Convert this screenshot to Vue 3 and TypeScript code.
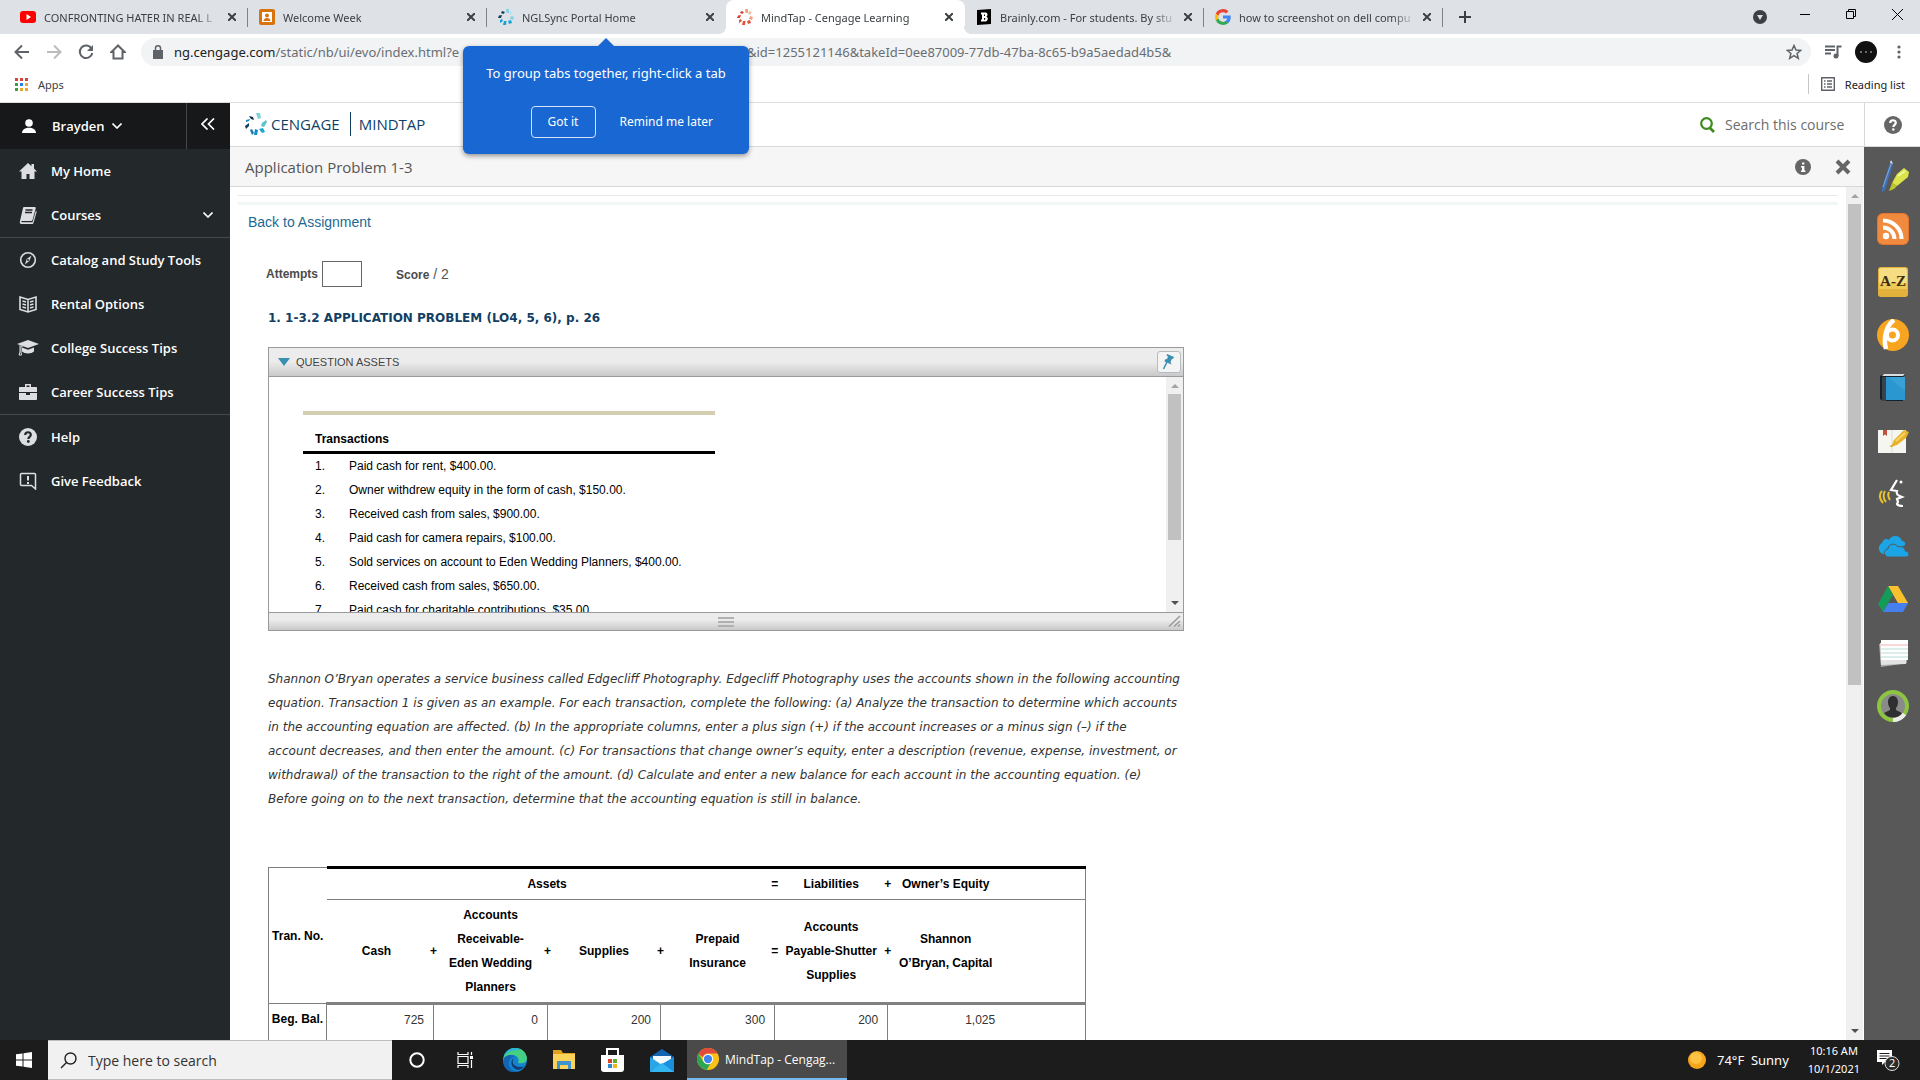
<script setup lang="ts">
import { ref } from 'vue'

interface Tab { title: string; icon: string; active?: boolean; plain?: boolean }

const cengageMark = (a: string, b: string, c: string, d: string): string =>
  `<path d="M8 0h3v4H8.500z" fill="${a}"/><path d="M12 2l3 1-2 3-2-1z" fill="${b}"/><path d="M13 7l3 1-1 3-3-1z" fill="${a}"/><path d="M10 12l3-1 1 3-3 1z" fill="${c}"/><path d="M6 12h2.500l-.5 4H5z" fill="${c}"/><path d="M2 11l2-1 1 2-3 2z" fill="${c}"/><path d="M1 6.500l3-.500-1 3H0z" fill="${d}"/><path d="M4 2l3 1-1.500 2L3 4z" fill="${d}"/>`

const art: Record<string, string> = {
  youtube: '<rect y="2" width="16" height="12" rx="3" fill="#f00"/><path d="M6.500 5v6l4.500-3z" fill="#fff"/>',
  week: '<rect width="16" height="16" rx="2" fill="#d9730d"/><path d="M3 3h10v10H3z" fill="#fff"/><circle cx="8" cy="6.500" r="2" fill="#d9730d"/><path d="M4.500 12c0-4 7-4 7 0z" fill="#d9730d"/>',
  ngl: cengageMark('#7fd3e6', '#b6e6ef', '#16a3d6', '#173d5c'),
  mindtap: cengageMark('#f2a083', '#f6bfa8', '#e0533a', '#d9432f'),
  brainly: '<path d="M1 1l14-1v15L1 16z" fill="#000"/><path d="M5 3.500h4.500c2.500 0 2.500 3.500.8 4 2.200.6 2 5-1 5H5v-2h1v-5H5zm3 2v1.500h1V5.500zm0 3.500v1.800h1.200V9z" fill="#fff" fill-rule="evenodd"/>',
  google: '<path d="M15.700 8.200c0-.6 0-1.100-.2-1.600H8v3h4.300a3.700 3.700 0 01-1.600 2.400v2h2.600c1.500-1.400 2.400-3.400 2.400-5.800z" fill="#4285f4"/><path d="M8 16c2.200 0 4-.7 5.300-1.900l-2.600-2A4.800 4.800 0 013.500 9.500H.9v2.100A8 8 0 008 16z" fill="#34a853"/><path d="M3.500 9.500a4.800 4.800 0 010-3.100V4.300H.9a8 8 0 000 7.200z" fill="#fbbc05"/><path d="M8 3.200c1.200 0 2.300.4 3.100 1.200l2.300-2.300A8 8 0 00.9 4.400l2.600 2A4.800 4.800 0 018 3.200z" fill="#ea4335"/>',
  home: '<path d="M9 1L0 9.500h2.500V17h5v-5h3v5h5V9.500H18l-3-3V2h-2.500v2.200z" fill="#dcdedf"/>',
  courses: '<path d="M5 1h10.500c1 0 1.500.6 1.200 1.500L13.500 14c-.2.700-.7 1-1.400 1H3c-1 .1-1 1.300 0 1.300h10.500L16.800 5l1 .5-3.200 11c-.3 1-.7 1.500-1.600 1.500H2.500C.8 18 .4 16.300 1 15L4 2c.1-.6.4-1 1-1z" fill="#dcdedf"/><path d="M6.500 4h7M6 6.500h7" stroke="#23282b" stroke-width="1.300"/>',
  compass: '<circle cx="9" cy="9" r="7.300" fill="none" stroke="#dcdedf" stroke-width="1.600"/><path d="M12.500 4.500L10.300 10 6 13.500 7.700 8z" fill="#dcdedf"/><circle cx="9" cy="9" r="1" fill="#23282b"/>',
  rental: '<path d="M1 2l8 2.500L17 2v12.500L9 17l-8-2.500zM9 4.500V17M3.500 6l3.500 1M3.500 9L7 10M3.500 12l3.500 1M14.500 6L11 7M14.500 9L11 10M14.500 12L11 13" fill="none" stroke="#dcdedf" stroke-width="1.600"/>',
  college: '<path d="M11 1L0 5l11 4 11-4z" fill="#dcdedf"/><path d="M5 8.500v4c2.500 2.600 9.500 2.600 12 0v-4l-6 2.200z" fill="#dcdedf"/><path d="M3 6v7l-1 3h2.500L4 13V7.500l6-2" fill="none" stroke="#dcdedf"/>',
  career: '<path d="M6 4V1h6v3h5c.6 0 1 .4 1 1v4H0V5c0-.6.400-1 1-1zm1.500-1.500V4h3V2.500zM0 10h7v2h4v-2h7v6c0 .600-.4 1-1 1H1c-.6 0-1-.4-1-1z" fill="#dcdedf" fill-rule="evenodd"/>',
  help: '<circle cx="9" cy="9" r="9" fill="#dcdedf"/><path d="M6.200 7c0-3.600 5.600-3.600 5.600-.2 0 2-2.500 2.100-2.500 4.200" fill="none" stroke="#23282b" stroke-width="2.200"/><circle cx="9.300" cy="13.500" r="1.400" fill="#23282b"/>',
  feedback: '<path d="M2.500 1.500h13c.6 0 1 .4 1 1V17l-4-3.500h-10c-.6 0-1-.4-1-1v-10c0-.6.4-1 1-1z" fill="none" stroke="#dcdedf" stroke-width="1.500"/><path d="M9 4v4.500M9 10v2" stroke="#dcdedf" stroke-width="2"/>',
  pens: '<path d="M13 3l3 1L8 30l-3 2 0-4z" fill="#3f73b5"/><path d="M13 3l1-3 2 4z" fill="#e8e8e8"/><path d="M6 27L14 4" stroke="#7fa9dc"/><path d="M20 14l7-6 5 4-1 5-11 9-5-3z" fill="#dbe54a"/><path d="M15 23l5 3-3 3-5 2z" fill="#b9c62c"/><path d="M21 16l7-5" stroke="#f3f89a" stroke-width="2"/>',
  rss: '<rect width="32" height="32" rx="6" fill="#e8732c"/><rect x="1" y="1" width="30" height="30" rx="5" fill="#f08a3e"/><circle cx="9" cy="23" r="3.200" fill="#fff"/><path d="M6 14.500A11.500 11.500 0 0117.500 26M6 7.500A18.500 18.500 0 0124.500 26" fill="none" stroke="#fff" stroke-width="4"/>',
  plate: '<rect x="1" y="1" width="30" height="30" rx="3" fill="#e2b23c"/><rect x="2" y="2" width="28" height="20" rx="2" fill="#f6dd83"/><path d="M2 17h28v6H2z" fill="#efc957"/>',
  six: '<circle cx="16" cy="16" r="16" fill="#f7a520"/><path d="M17 1C9 7 6 19 9 30" fill="none" stroke="#fff" stroke-width="4.500"/><circle cx="15.500" cy="16" r="5.500" fill="none" stroke="#fff" stroke-width="4"/>',
  book: '<path d="M3 4l4-2h22l-3 3v24H6l-3-2z" fill="#12222e"/><path d="M7 2h21l-2 2H5z" fill="#d8dde0"/><path d="M8 5h20v23H8z" fill="#2a97d0"/><path d="M5 5h4v24H5z" fill="#3a4349"/><path d="M11 5l17 14V5z" fill="#47abdc" opacity=".5"/>',
  note: '<rect x="1" y="5" width="28" height="23" fill="#f5f6ef"/><path d="M15 5v23" stroke="#dcded6"/><path d="M6 5h4v6l-2-1.500L6 11z" fill="#c5503c"/><path d="M17 15L27 5l5 2-3 6-9 7-6 2z" fill="#e8b32b"/><path d="M19 16l9-8" stroke="#f6d566" stroke-width="2"/><path d="M12 21l4-1-1 2z" fill="#d8921b"/>',
  speech: '<path d="M20 2l-6 10 6 1c-1 3 0 4 5 6l-5 2 1 3-1 2c1 2 3 2 6 2" fill="none" stroke="#fff" stroke-width="2.200"/><circle cx="24" cy="4" r="1.500" fill="#fff"/><path d="M5 13c-3 3-3 8 1 12M8 13c-2 3-2 8 1 11M12 14c-1 2-1 5 1 8" fill="none" stroke="#e8c52e" stroke-width="2"/>',
  cloud: '<path d="M6 23a6 6 0 01-1-11c1-4 5-5 7-3 2-5 11-6 13 1 2 0 4 2 3 4L12 23z" fill="#1ba5e6"/><path d="M12 26c-6 0-6-8-1-8 0-5 7-7 10-2 4-2 8 2 7 4 5 0 5 6 1 6z" fill="#1ba5e6" stroke="#585858"/>',
  drive: '<path d="M11 2h10l10 17H21z" fill="#fbc02d"/><path d="M11 2l5 8.500L6 28 1 20z" fill="#159b58"/><path d="M11.500 19H31l-5 9H6z" fill="#4680ee"/>',
  cards: '<path d="M2 7l27-1 1 20-26 4z" fill="#a9a9a9"/><path d="M3 6h26v21l-25 1z" fill="#e2e2e2"/><path d="M4 3h27v20H4z" fill="#fff"/><path d="M4 8h27" stroke="#efb1b1"/><path d="M4 12h27M4 16h27M4 20h27" stroke="#b7dcd8"/>',
  profile: '<circle cx="16" cy="16" r="14" fill="#8a8a8a" stroke="#8dc540" stroke-width="4"/><path d="M16 30a14 14 0 0011.500-6" fill="none" stroke="#ececec" stroke-width="4"/><path d="M11 12c0-8 10-8 10 0 0 3-1 5-2 6v2l6 3c-4 6-14 6-18 0l6-3v-2c-1-1-2-3-2-6z" fill="#2f2f2f"/>',
  edge: '<circle cx="12" cy="12" r="12" fill="#1583d0"/><path d="M1 8C5-3 22-3 24 10c0 5-5 6-9 5 2-4-1-8-6-8-4 0-7 2-9 6z" fill="#45cf84"/><path d="M1 8C4 0 12-2 18 2c-6 0-12 0-17 6z" fill="#28b6d8"/><path d="M9 9c-6 5-3 15 6 14-9 4-17-4-14-13 2-3 7-4 11-2z" fill="#1464b4"/><path d="M12 9c-4 3-3 10 5 10 2 0 3-.4 4-1-2 4-7 5-10 2-4-3-3-9 1-11z" fill="#123c6b"/>',
  folder: '<path d="M1 2h8l2 3h12v5H1z" fill="#e0a21c"/><path d="M1 6h22v15H1z" fill="#fbd35b"/><path d="M5 13h14v8h-3v-4H8v4H5z" fill="#3d94cf"/>',
  store: '<path d="M6 8V1h11v7" fill="none" stroke="#fff" stroke-width="2"/><path d="M0 7h23v14a3 3 0 01-3 3H3a3 3 0 01-3-3z" fill="#fff"/><path d="M7 11h4v4H7z" fill="#d8452a"/><path d="M12 11h4v4h-4z" fill="#6bab2c"/><path d="M7 16h4v4H7z" fill="#2e8bd0"/><path d="M12 16h4v4h-4z" fill="#f0b51d"/>',
  mail: '<path d="M0 9l12-8 12 8v4H0z" fill="#1165b1"/><path d="M3 8h18v8H3z" fill="#f4fbff"/><path d="M0 9l12 8-12 7z" fill="#2aa6e8"/><path d="M24 9v15H0l12-8z" fill="#1b8fdf"/><path d="M0 24l12-9 12 9z" fill="#33b5f2"/>',
  chrome: '<circle cx="12" cy="12" r="12" fill="#fbc116"/><path d="M12 0a12 12 0 0110.400 6H12a6 6 0 00-5.600 4L1.500 6.200A12 12 0 0112 0z" fill="#e04a3a"/><path d="M1.500 6A12 12 0 0010.500 24l5-8.500A6 6 0 017 15z" fill="#2fa653"/><circle cx="12" cy="12" r="5.600" fill="#fff"/><circle cx="12" cy="12" r="4.500" fill="#3f83f1"/>',
}

const tabs: Tab[] = [
  { title: 'CONFRONTING HATER IN REAL L', icon: 'youtube' },
  { title: 'Welcome Week', icon: 'week' },
  { title: 'NGLSync Portal Home', icon: 'ngl', plain: true },
  { title: 'MindTap - Cengage Learning', icon: 'mindtap', active: true, plain: true },
  { title: 'Brainly.com - For students. By stu', icon: 'brainly' },
  { title: 'how to screenshot on dell compu', icon: 'google' },
]

const navGroups = [
  [
    { label: 'My Home', icon: 'home' },
    { label: 'Courses', icon: 'courses', more: true },
  ],
  [
    { label: 'Catalog and Study Tools', icon: 'compass' },
    { label: 'Rental Options', icon: 'rental' },
    { label: 'College Success Tips', icon: 'college' },
    { label: 'Career Success Tips', icon: 'career' },
  ],
  [
    { label: 'Help', icon: 'help' },
    { label: 'Give Feedback', icon: 'feedback' },
  ],
]

const tools = [
  { name: 'Highlights and notes', icon: 'pens' },
  { name: 'RSS feed', icon: 'rss' },
  { name: 'Glossary', icon: 'plate', text: 'A-Z' },
  { name: 'Progress', icon: 'six' },
  { name: 'Reader', icon: 'book' },
  { name: 'Notebook', icon: 'note' },
  { name: 'ReadSpeaker', icon: 'speech' },
  { name: 'OneDrive', icon: 'cloud' },
  { name: 'Google Drive', icon: 'drive' },
  { name: 'Flashcards', icon: 'cards' },
  { name: 'Profile', icon: 'profile' },
]

const transactions = [
  'Paid cash for rent, $400.00.',
  'Owner withdrew equity in the form of cash, $150.00.',
  'Received cash from sales, $900.00.',
  'Paid cash for camera repairs, $100.00.',
  'Sold services on account to Eden Wedding Planners, $400.00.',
  'Received cash from sales, $650.00.',
  'Paid cash for charitable contributions, $35.00.',
]

const columnWidths = [58, 100, 7, 7, 100, 7, 7, 99, 7, 7, 100, 7, 7, 99, 7, 7, 102, 89]

const apps = [
  { name: 'Microsoft Edge', icon: 'edge' },
  { name: 'File Explorer', icon: 'folder' },
  { name: 'Microsoft Store', icon: 'store' },
  { name: 'Mail', icon: 'mail' },
]

const courseQuery = ref('')
const attempts = ref('')
const systemQuery = ref('')
</script>

<template>
  <div class="screen">
    <header class="browser">
      <div class="tabstrip">
        <div v-for="t in tabs" :key="t.title" class="tab" :class="{ active: t.active, plain: t.plain }">
          <svg class="fav" viewBox="0 0 16 16" v-html="art[t.icon]"></svg>
          <span class="tab-title">{{ t.title }}</span>
          <button class="ic" aria-label="Close tab"><svg width="8" height="8" viewBox="0 0 8 8"><path d="M0 0l8 8M8 0L0 8" stroke="#3c4043" stroke-width="2" /></svg></button>
        </div>
        <button class="ic new-tab" aria-label="New tab"><svg width="12" height="12" viewBox="0 0 12 12"><path d="M6 0v12M0 6h12" stroke="#3c4043" stroke-width="2" /></svg></button>
        <div class="win">
          <button class="ic search-tabs" aria-label="Search tabs"><svg width="14" height="14" viewBox="0 0 14 14"><circle cx="7" cy="7" r="7" fill="#3c4043" /><path d="M4 5h6L7 10z" fill="#dee1e6" /></svg></button>
          <button class="ic" aria-label="Minimize"><svg width="10" height="10" viewBox="0 0 10 10"><path d="M0 5.500h10" stroke="#000" /></svg></button>
          <button class="ic" aria-label="Restore"><svg width="10" height="10" viewBox="0 0 10 10"><path d="M.5 2.500h7v7h-7zM2.500 2.500v-2h7v7h-2" fill="none" stroke="#000" /></svg></button>
          <button class="ic" aria-label="Close"><svg width="11" height="11" viewBox="0 0 11 11"><path d="M0 0l11 11M11 0L0 11" stroke="#000" /></svg></button>
        </div>
      </div>

      <div class="toolbar">
        <button class="ic nav-btn" aria-label="Back"><svg width="16" height="16" viewBox="0 0 16 16"><path d="M15 8H2M8 1.500L1.500 8 8 14.500" fill="none" stroke="#5f6368" stroke-width="2" /></svg></button>
        <button class="ic nav-btn" aria-label="Forward"><svg width="16" height="16" viewBox="0 0 16 16"><path d="M1 8h13M8 1.500L14.500 8 8 14.500" fill="none" stroke="#babcbe" stroke-width="2" /></svg></button>
        <button class="ic nav-btn" aria-label="Reload"><svg width="16" height="16" viewBox="0 0 16 16"><path d="M13.500 4.500A6.300 6.300 0 1014.300 9" fill="none" stroke="#5f6368" stroke-width="2" /><path d="M15 1v6H9z" fill="#5f6368" /></svg></button>
        <button class="ic nav-btn" aria-label="Home"><svg width="16" height="16" viewBox="0 0 16 16"><path d="M8 1.500L1.500 8H3.500v6.500h9V8h2z" fill="none" stroke="#5f6368" stroke-width="2" /></svg></button>
        <div class="omnibox" role="textbox" aria-label="Address bar">
          <svg class="lock" width="10" height="14" viewBox="0 0 10 14"><path d="M0 5h10v9H0z" fill="#5f6368" /><path d="M2.500 5V3c0-3 5-3 5 0v2" fill="none" stroke="#5f6368" stroke-width="1.500" /></svg>
          <span class="url-start"><b>ng.cengage.com</b>/static/nb/ui/evo/index.html?e</span>
          <span class="url-end">&amp;id=1255121146&amp;takeId=0ee87009-77db-47ba-8c65-b9a5aedad4b5&amp;</span>
          <button class="ic" aria-label="Bookmark this tab"><svg width="16" height="16" viewBox="0 0 16 16"><path d="M8 1.500l2 4.500 4.800.4-3.700 3.100 1.200 4.800L8 11.700l-4.300 2.600 1.200-4.800L1.200 6.400 6 6z" fill="none" stroke="#5f6368" stroke-width="1.500" /></svg></button>
        </div>
        <button class="ic media" aria-label="Media controls"><svg width="17" height="14" viewBox="0 0 17 14"><path d="M0 1.500h10M0 5h10M0 8.500h6M12.500 11V1.500H16.500" fill="none" stroke="#5f6368" stroke-width="2" /><circle cx="11" cy="11" r="2.500" fill="#5f6368" /></svg></button>
        <button class="ic avatar" aria-label="Profile"><i></i><i></i><i></i></button>
        <button class="ic dots" aria-label="Menu"><svg width="4" height="14" viewBox="0 0 4 14"><circle cx="2" cy="2" r="1.600" fill="#5f6368" /><circle cx="2" cy="7" r="1.600" fill="#5f6368" /><circle cx="2" cy="12" r="1.600" fill="#5f6368" /></svg></button>
      </div>

      <div class="bookmarks">
        <a href="#" class="apps-link">
          <svg width="13" height="13" viewBox="0 0 13 13"><path d="M0 0h3v3H0zM5 0h3v3H5zM10 0h3v3h-3z" fill="#d6453c" /><path d="M0 5h3v3H0z" fill="#3b9c4b" /><path d="M5 5h3v3H5z" fill="#2d7ff0" /><path d="M10 5h3v3h-3zM5 10h3v3H5zM10 10h3v3h-3z" fill="#e8a92b" /><path d="M0 10h3v3H0z" fill="#3b9c4b" /></svg>
          Apps
        </a>
        <button class="reading">
          <svg width="14" height="14" viewBox="0 0 14 14"><path d="M.7.7h12.600v12.600H.7z" fill="none" stroke="#5f6368" stroke-width="1.400" /><path d="M3 4h1.500M3 7h1.500M3 10h1.500M6 4h5M6 7h5M6 10h5" stroke="#5f6368" stroke-width="1.500" /></svg>
          Reading list
        </button>
      </div>

      <div class="promo" role="dialog" aria-label="Tab groups">
        <p>To group tabs together, right-click a tab</p>
        <div class="promo-actions">
          <button class="got">Got it</button>
          <button class="later">Remind me later</button>
        </div>
      </div>
    </header>

    <div class="page">
      <aside class="side">
        <div class="side-head">
          <button class="user">
            <svg width="16" height="15" viewBox="0 0 16 15"><circle cx="8" cy="4" r="3.800" fill="#fff" /><path d="M1 14c0-7 14-7 14 0z" fill="#fff" /></svg>
            <span>Brayden</span>
            <svg width="10" height="6" viewBox="0 0 10 6"><path d="M.5.5L5 5 9.500.5" fill="none" stroke="#fff" stroke-width="1.600" /></svg>
          </button>
          <button class="collapse" aria-label="Collapse menu"><svg width="14" height="12" viewBox="0 0 14 12"><path d="M6.500.5L1 6l5.500 5.500M13 .5L7.500 6l5.500 5.500" fill="none" stroke="#fff" stroke-width="1.700" /></svg></button>
        </div>
        <nav>
          <ul v-for="(g, i) in navGroups" :key="i">
            <li v-for="n in g" :key="n.label">
              <a href="#">
                <svg class="nav-ic" :class="{ big: n.icon === 'college' }" :viewBox="n.icon === 'college' ? '0 0 22 18' : '0 0 18 18'" v-html="art[n.icon]"></svg>
                <span>{{ n.label }}</span>
                <svg v-if="'more' in n" class="chev" width="10" height="6" viewBox="0 0 10 6"><path d="M.5.5L5 5 9.500.5" fill="none" stroke="#fff" stroke-width="1.600" /></svg>
              </a>
            </li>
          </ul>
        </nav>
      </aside>

      <div class="work">
        <div class="brand">
          <a href="#" class="logo">
            <svg width="22" height="22" viewBox="0 0 22 22"><path d="M11 0h4l1 5-3 1z" fill="#7bd3dc" /><path d="M17 10l4-3 1 2-3 5-3-1z" fill="#5bc3cf" /><path d="M14 16l4-1 2 4-3 1z" fill="#1aa6cf" /><path d="M10 16l3 1-1 5H9z" fill="#0e8ecb" /><path d="M5 17l2-1 2 4-2 2z" fill="#1478b5" /><path d="M0 13l4-3v3l-3 3z" fill="#123f63" /><path d="M1 7l4-1-1 2-3 1z" fill="#1389bd" /><path d="M4 3l4 1 1 3-3-1z" fill="#0b2c4a" /></svg>
            <span>CENGAGE</span><span class="mt">MINDTAP</span>
          </a>
          <label class="find">
            <svg width="15" height="16" viewBox="0 0 15 16"><circle cx="6.500" cy="6.500" r="5.300" fill="none" stroke="#3d8a1f" stroke-width="2.200" /><path d="M10 11l4 4" stroke="#3d8a1f" stroke-width="2.600" /></svg>
            <input v-model="courseQuery" type="search" placeholder="Search this course" aria-label="Search this course">
          </label>
          <button class="ic ask" aria-label="Help"><svg width="18" height="18" viewBox="0 0 18 18"><circle cx="9" cy="9" r="9" fill="#666" /><path d="M6.200 7c0-3.600 5.600-3.600 5.600-.2 0 2-2.500 2.100-2.500 4.200" fill="none" stroke="#fff" stroke-width="2.200" /><circle cx="9.300" cy="13.500" r="1.300" fill="#fff" /></svg></button>
        </div>

        <div class="below">
          <div class="reader">
            <div class="title-bar">
              <h1>Application Problem 1-3</h1>
              <button class="ic" aria-label="Information"><svg width="16" height="16" viewBox="0 0 16 16"><circle cx="8" cy="8" r="8" fill="#666" /><path d="M7 3.500h2.400v2H7zM6 7h3.400v4.500h1V13H6v-1.500h1v-3H6z" fill="#fff" /></svg></button>
              <button class="ic" aria-label="Close"><svg width="16" height="16" viewBox="0 0 16 16"><path d="M2 2l12 12M14 2L2 14" stroke="#666" stroke-width="4" /></svg></button>
            </div>
            <div class="scroll-wrap">
              <main>
                <div class="rule"></div>
                <a href="#" class="back">Back to Assignment</a>
                <div class="score">
                  <label for="attempts">Attempts</label>
                  <input id="attempts" v-model="attempts" type="text">
                  <span><b>Score</b> / 2</span>
                </div>
                <h2>1. 1-3.2 APPLICATION PROBLEM (LO4, 5, 6), p. 26</h2>

                <section class="assets">
                  <div class="assets-head">
                    <button class="toggle"><svg width="12" height="8" viewBox="0 0 12 8"><path d="M0 0h12L6 8z" fill="#3a8fb0" /></svg>QUESTION ASSETS</button>
                    <button class="pin" aria-label="Pin"><svg width="14" height="16" viewBox="0 0 14 16"><path d="M5 0l7 3-1 2-1-.3-1.500 3.300 1 2.500-7-3 .5-2 2-.5L6 2.500 4.500 1.500z" fill="#3a8fb0" /><path d="M5 8l-3.500 7" stroke="#3a8fb0" stroke-width="1.500" /></svg></button>
                  </div>
                  <div class="assets-body">
                    <div class="tx">
                      <h3>Transactions</h3>
                      <table>
                        <tbody>
                          <tr v-for="(t, i) in transactions" :key="t"><td>{{ i + 1 }}.</td><td>{{ t }}</td></tr>
                        </tbody>
                      </table>
                    </div>
                    <div class="bar inner-bar">
                      <svg class="arrow" viewBox="0 0 8 5"><path d="M0 5l4-4 4 4z" fill="#a3a3a3" /></svg>
                      <div class="thumb"></div>
                      <svg class="arrow" viewBox="0 0 8 5"><path d="M0 0l4 4 4-4z" fill="#505050" /></svg>
                    </div>
                  </div>
                  <div class="assets-foot">
                    <svg width="16" height="10" viewBox="0 0 16 10"><path d="M0 1h16M0 5h16M0 9h16" stroke="#b0b0b0" stroke-width="2" /></svg>
                    <svg class="grip" width="13" height="12" viewBox="0 0 13 12"><path d="M1 11.500L12 1M6 11.500l6-5.500M10 11.500l2-2" stroke="#9a9a9a" stroke-width="1.500" /></svg>
                  </div>
                </section>

                <p class="prompt">Shannon O’Bryan operates a service business called Edgecliff Photography. Edgecliff Photography uses the accounts shown in the following accounting<br>equation. Transaction 1 is given as an example. For each transaction, complete the following: (a) Analyze the transaction to determine which accounts<br>in the accounting equation are affected. (b) In the appropriate columns, enter a plus sign (+) if the account increases or a minus sign (–) if the<br>account decreases, and then enter the amount. (c) For transactions that change owner’s equity, enter a description (revenue, expense, investment, or<br>withdrawal) of the transaction to the right of the amount. (d) Calculate and enter a new balance for each account in the accounting equation. (e)<br>Before going on to the next transaction, determine that the accounting equation is still in balance.</p>

                <table class="ledger">
                  <colgroup><col v-for="(w, i) in columnWidths" :key="i" :style="{ width: w + 'px' }"></colgroup>
                  <thead>
                    <tr class="r1">
                      <th rowspan="2" class="no">Tran. No.</th>
                      <th colspan="10">Assets</th>
                      <th colspan="2">=</th>
                      <th>Liabilities</th>
                      <th colspan="2">+</th>
                      <th>Owner’s Equity</th>
                      <th class="end"></th>
                    </tr>
                    <tr class="r2">
                      <th>Cash</th><th colspan="2">+</th>
                      <th>Accounts Receivable-<br>Eden Wedding Planners</th><th colspan="2">+</th>
                      <th>Supplies</th><th colspan="2">+</th>
                      <th>Prepaid<br>Insurance</th><th colspan="2">=</th>
                      <th class="wide">Accounts<br>Payable-Shutter<br>Supplies</th><th colspan="2">+</th>
                      <th>Shannon<br>O’Bryan, Capital</th><th class="end"></th>
                    </tr>
                  </thead>
                  <tbody>
                    <tr>
                      <th class="no">Beg. Bal.</th>
                      <td colspan="2">725</td><td colspan="3">0</td><td colspan="3">200</td><td colspan="3">300</td><td colspan="3">200</td><td colspan="3" class="last">1,025</td>
                    </tr>
                  </tbody>
                </table>
              </main>
              <div class="bar page-bar">
                <svg class="arrow" viewBox="0 0 8 5"><path d="M0 5l4-4 4 4z" fill="#a3a3a3" /></svg>
                <div class="thumb"></div>
                <svg class="arrow" viewBox="0 0 8 5"><path d="M0 0l4 4 4-4z" fill="#505050" /></svg>
              </div>
            </div>
          </div>
          <div class="rail">
            <button v-for="t in tools" :key="t.name" :aria-label="t.name">
              <svg width="32" height="32" viewBox="0 0 32 32" v-html="art[t.icon]"></svg>
              <span v-if="t.text">{{ t.text }}</span>
            </button>
          </div>
        </div>
      </div>
    </div>

    <footer class="taskbar">
      <button class="tb start" aria-label="Start"><svg width="16" height="16" viewBox="0 0 16 16"><path d="M0 2.300L6.500 1.400V7.500H0zM7.500 1.200L16 0v7.500H7.500zM0 8.500h6.500v6.100L0 13.700zM7.500 8.500H16V16l-8.500-1.200z" fill="#fff" /></svg></button>
      <label class="sys-search">
        <svg width="17" height="17" viewBox="0 0 17 17"><circle cx="10.500" cy="6.500" r="5.500" fill="none" stroke="#222" stroke-width="1.400" /><path d="M6.500 10.500L1 16" stroke="#222" stroke-width="1.500" /></svg>
        <input v-model="systemQuery" type="text" placeholder="Type here to search" aria-label="Type here to search">
      </label>
      <button class="tb" aria-label="Cortana"><svg width="16" height="16" viewBox="0 0 16 16"><circle cx="8" cy="8" r="6.700" fill="none" stroke="#fff" stroke-width="2" /></svg></button>
      <button class="tb" aria-label="Task View"><svg width="17" height="16" viewBox="0 0 17 16"><path d="M1 0v2.500h10V0M1 16v-2.500h10V16M1 4.500h10v7H1zM14.500 0v3M14.500 8v8" fill="none" stroke="#fff" stroke-width="1.200" /><path d="M13 4h3v3h-3z" fill="#fff" /></svg></button>
      <button v-for="a in apps" :key="a.name" class="tb" :aria-label="a.name"><svg width="24" height="24" viewBox="0 0 24 24" v-html="art[a.icon]"></svg></button>
      <button class="running"><svg width="22" height="22" viewBox="0 0 24 24" v-html="art.chrome"></svg>MindTap - Cengag...</button>
      <div class="tray">
        <svg width="20" height="20" viewBox="0 0 20 20"><circle cx="10" cy="10" r="9" fill="#f8a51b" /><circle cx="9" cy="8" r="6" fill="#fcc243" /></svg>
        <span class="weather">74°F&nbsp; Sunny</span>
        <time>10:16 AM<br>10/1/2021</time>
        <button class="ic note-btn" aria-label="Notifications"><svg width="24" height="24" viewBox="0 0 24 24"><path d="M1 2h15v12H9l-3 3v-3H1z" fill="#fff" /><path d="M3.500 5.500h10M3.500 8h10M3.500 10.500h7" stroke="#1c1c1c" /><circle cx="16" cy="15.500" r="7" fill="#2b2b2b" stroke="#ddd" /></svg><span>2</span></button>
      </div>
    </footer>
  </div>
</template>

<style>
body { overflow: hidden; }
</style>

<style scoped>
* { box-sizing: border-box; }
button { border: 0; background: none; padding: 0; margin: 0; font: inherit; color: inherit; cursor: pointer; }
a { color: inherit; text-decoration: none; }
h1, h2, h3, p, ul { margin: 0; padding: 0; }
ul { list-style: none; }
svg { display: block; flex: none; }
input::placeholder { color: inherit; opacity: 1; }
.ic { display: flex; align-items: center; justify-content: center; flex: none; }
.screen { height: 100vh; display: flex; flex-direction: column; overflow: hidden; background: #fff; font-family: "Open Sans", "Noto Sans", sans-serif; font-size: 12px; color: #3c4043; }

.browser { position: relative; flex: none; border-bottom: 1px solid #dadce0; font-family: "Noto Sans", "Open Sans", sans-serif; font-size: 11px; }
.tabstrip { display: flex; height: 34px; background: #dee1e6; padding-left: 9px; }
.tab { position: relative; flex: 0 1 239px; min-width: 0; display: flex; align-items: center; padding: 0 11px; border-right: 1px solid transparent; }
.tab::after { content: ""; position: absolute; right: -1px; top: 8px; width: 1px; height: 19px; background: #808387; }
.tab.plain::after { display: none; }
.tab.active { background: #fff; border-radius: 8px 8px 0 0; }
.tab.active::before, .tab.active::after { content: ""; display: block; position: absolute; top: auto; bottom: 0; width: 8px; height: 8px; }
.tab.active::before { left: -8px; background: radial-gradient(circle at 0 0, #dee1e6 8px, #fff 8px); }
.tab.active::after { right: -8px; background: radial-gradient(circle at 100% 0, #dee1e6 8px, #fff 8px); }
.fav { width: 16px; height: 16px; margin-right: 8px; }
.tab-title { flex: 1; min-width: 0; white-space: nowrap; overflow: hidden; margin-right: 7px; -webkit-mask-image: linear-gradient(90deg, #000 calc(100% - 24px), transparent); mask-image: linear-gradient(90deg, #000 calc(100% - 24px), transparent); }
.new-tab { width: 44px; }
.win { margin-left: auto; display: flex; height: 28px; }
.win button { width: 46px; }
.win .search-tabs { height: 34px; width: 44px; }
.toolbar { display: flex; align-items: center; height: 36px; padding-left: 6px; }
.nav-btn { width: 32px; }
.omnibox { flex: 1; display: flex; align-items: center; height: 28px; margin-left: 7px; padding: 0 9px 0 12px; border-radius: 14px; background: #f1f3f4; font-size: 13px; color: #6a6e73; white-space: nowrap; }
.omnibox b { font-weight: 400; color: #202124; }
.lock { margin-right: 11px; }
.url-start { flex: 0 0 573px; overflow: hidden; }
.url-end { flex: 1; }
.media { width: 44px; }
.avatar { width: 22px; height: 22px; border-radius: 50%; background: #111; gap: 3px; }
.avatar i { width: 2px; height: 2px; background: #888; border-radius: 50%; }
.dots { width: 43px; }
.bookmarks { display: flex; justify-content: space-between; align-items: center; height: 32px; padding: 0 15px 4px; }
.apps-link, .reading { display: flex; align-items: center; gap: 10px; }
.reading { height: 20px; border-left: 1px solid #c4c6c9; padding-left: 12px; color: #202124; }
.promo { position: absolute; z-index: 5; left: 463px; top: 46px; width: 286px; height: 108px; border-radius: 6px; background: #1967d2; color: #fff; text-align: center; padding-top: 18px; font-size: 13px; line-height: 18px; box-shadow: 0 2px 5px rgba(0, 0, 0, .4); }
.promo::before { content: ""; position: absolute; left: 135px; top: -8px; border: 8px solid transparent; border-top: 0; border-bottom-color: #1967d2; }
.promo-actions { display: flex; justify-content: flex-end; align-items: center; gap: 24px; margin-top: 24px; padding-right: 36px; font-family: "Open Sans", sans-serif; }
.got { width: 65px; height: 32px; border: 1px solid #d5e2f7; border-radius: 4px; }
.later { white-space: nowrap; font-size: 12px; }
.got, .later { font-size: 12px; font-family: "Noto Sans", sans-serif; }

.page { flex: 1; min-height: 0; display: flex; }
.side { flex: 0 0 230px; background: #23282b; color: #fff; font-weight: 600; font-size: 13px; }
.side-head { display: flex; height: 46px; background: #17181a; }
.user { flex: 1; display: flex; align-items: center; padding-left: 21px; gap: 7px; }
.user span { margin-left: 8px; }
.collapse { flex: 0 0 44px; display: flex; justify-content: center; align-items: center; border-left: 1px solid #44474a; padding: 0 2px 4px 0; }
.side li a { display: flex; align-items: center; height: 44px; padding: 0 17px 0 19px; }
.side ul + ul { border-top: 1px solid #44494c; }
.nav-ic { width: 18px; height: 18px; margin-right: 14px; }
.nav-ic.big { width: 22px; margin: 0 12px 0 -2px; }
.chev { margin-left: auto; }

.work { flex: 1; min-width: 0; display: flex; flex-direction: column; }
.brand { flex: none; display: flex; align-items: center; height: 44px; border-bottom: 1px solid #d8d8d8; padding-left: 15px; }
.logo { display: flex; align-items: center; color: #0f3f66; font-size: 15px; line-height: 24px; padding-bottom: 2px; }
.logo svg { margin-right: 4px; }
.mt { margin-left: 10px; padding-left: 8px; border-left: 1px solid #0f3f66; }
.find { margin-left: auto; display: flex; align-items: center; gap: 10px; color: #6d6d6d; }
.find input { width: 139px; border: 0; outline: 0; padding: 0; background: none; color: inherit; font: 14px "Open Sans", sans-serif; }
.ask { flex: 0 0 56px; height: 43px; border-left: 1px solid #d8d8d8; }
.below { flex: 1; min-height: 0; display: flex; }
.reader { flex: 1; min-width: 0; display: flex; flex-direction: column; }
.title-bar { flex: none; display: flex; align-items: center; gap: 24px; height: 40px; background: #f6f6f6; border-bottom: 1px solid #d8d8d8; padding: 0 13px 0 15px; }
.title-bar h1 { flex: 1; font-size: 15px; font-weight: 400; color: #555; }
.scroll-wrap { flex: 1; min-height: 0; display: flex; padding-right: 1px; }
main { flex: 1; min-width: 0; padding: 8px 8px 0; overflow: hidden; font-family: "Liberation Sans", Arial, sans-serif; color: #000; }
.rule { height: 10px; border-top: 1px solid #e6eaea; border-bottom: 3px solid #f3f6f6; }
.back { display: block; width: max-content; margin: 8px 0 0 10px; font-size: 14px; line-height: 18px; color: #1b6a94; }
.score { display: flex; align-items: center; margin: 30px 0 0 28px; height: 26px; font-size: 14px; color: #555; }
.score label, .score b { font-size: 12px; font-weight: 700; color: #4b4b4b; }
.score input { width: 40px; height: 26px; border: 1px solid #666; margin: 0 34px 0 4px; }
h2 { margin: 19px 0 0 30px; font: 700 12px/24px "DejaVu Sans", Verdana, sans-serif; color: #123f63; }
.assets { width: 916px; max-width: 100%; margin: 17px 0 0 30px; border: 1px solid #9a9a9a; }
.assets-head { display: flex; align-items: center; height: 29px; padding: 0 2px 0 9px; background: linear-gradient(#ececec 50%, #c9c9c9); border-bottom: 1px solid #9a9a9a; }
.toggle { display: flex; align-items: center; gap: 6px; color: #444; font-size: 11px; }
.pin { margin-left: auto; width: 24px; height: 22px; display: flex; align-items: center; justify-content: center; background: #f4f4f4; border: 1px solid #b5bdc1; border-radius: 3px; }
.assets-body { display: flex; justify-content: space-between; height: 235px; overflow: hidden; }
.tx { width: 412px; margin: 34px 0 0 34px; border-top: 4px solid #d4cdb0; font-size: 12px; line-height: 24px; }
.tx h3 { font-size: 12px; line-height: 24px; padding: 12px 12px 0; border-bottom: 3px solid #000; }
.tx table { border-collapse: collapse; }
.tx td { padding: 0; white-space: nowrap; }
.tx td:first-child { width: 46px; padding-left: 12px; }
.bar { flex: none; display: flex; flex-direction: column; align-items: center; width: 17px; background: #f0f0f0; }
.arrow { width: 8px; height: 5px; margin: 6px 0; }
.thumb { width: 13px; background: #c1c1c1; }
.arrow:last-child { margin-top: auto; }
.inner-bar .thumb { height: 146px; }
.page-bar .thumb { height: 481px; }
.assets-foot { position: relative; display: flex; align-items: center; justify-content: center; height: 18px; border-top: 1px solid #9a9a9a; background: linear-gradient(#ececec 40%, #c9c9c9); }
.grip { position: absolute; right: 2px; bottom: 3px; }
.prompt { margin: 36px 0 0 30px; font: italic 12px/24px "DejaVu Sans", Verdana, sans-serif; color: #333; white-space: nowrap; }
.ledger { margin: 55px 0 0 30px; width: 817px; table-layout: fixed; border-collapse: collapse; font-size: 12px; line-height: 24px; }
.ledger th, .ledger td { padding: 0; }
.r1 { height: 32px; }
.r1 th:not(.no) { border-top: 3px solid #000; border-bottom: 1px solid #808080; }
.r2 { height: 104px; }
.r2 th { border-bottom: 3px solid #808080; }
.ledger .no { border: 1px solid #808080; white-space: nowrap; }
thead .no { border-right: 0 !important; }
.ledger .end { border-right: 1px solid #808080; }
.wide { white-space: nowrap; }
.ledger td { border: 1px solid #808080; border-top-width: 3px; height: 60px; padding: 3px 9px 0 0; text-align: right; vertical-align: top; color: #333; }
.ledger tbody .no { vertical-align: top; padding-top: 3px; }
.ledger .last { padding-right: 90px; }

.rail { flex: 0 0 56px; background: #585858; padding: 2px 0 0 2px; }
.rail button { position: relative; display: flex; width: 100%; height: 53px; align-items: center; justify-content: center; }
.rail span { position: absolute; font: 700 15px "Liberation Serif", serif; color: #3b2d0a; }

.taskbar { flex: 0 0 40px; display: flex; background: #1c1c1c; color: #fff; }
.tb { flex: 0 0 49px; display: flex; align-items: center; justify-content: center; }
.start { flex-basis: 48px; }
.sys-search { flex: 0 0 344px; display: flex; align-items: center; gap: 11px; padding-left: 12px; background: #f1f1f1; border: 1px solid #bdbdbd; border-width: 1px 0; color: #333; }
.sys-search input { flex: 1; min-width: 0; border: 0; outline: 0; padding: 0; background: none; color: inherit; font: 14px "Open Sans", sans-serif; }
.running { flex: 0 0 160px; display: flex; align-items: center; gap: 6px; margin-left: 1px; padding-left: 10px; background: #4a4a4a; border-bottom: 2px solid #76b9ed; white-space: nowrap; }
.tray { margin-left: auto; display: flex; align-items: center; font-family: "Noto Sans", sans-serif; }
.weather { margin: 0 19px 0 10px; font-size: 13px; }
time { text-align: center; font-size: 11px; line-height: 18px; }
.note-btn { position: relative; width: 40px; height: 40px; margin: 0 12px 0 8px; }
.note-btn span { position: absolute; left: 21px; top: 15px; font-size: 11px; }
</style>
